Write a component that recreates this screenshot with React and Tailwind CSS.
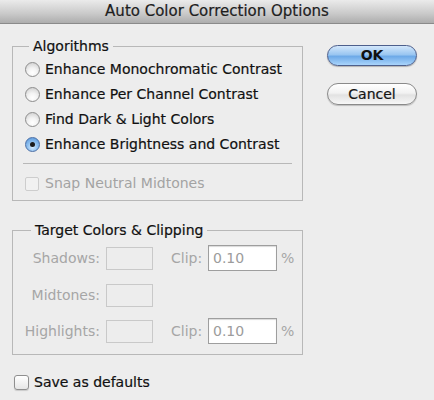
import React from "react";

const font = { fontFamily: '"DejaVu Sans", "Liberation Sans", sans-serif' };

function Radio({ checked, label }) {
  return (
    <div className="flex h-[25px] items-center pl-[12px]">
      <span
        className={
          "flex h-[15px] w-[15px] shrink-0 items-center justify-center rounded-full border " +
          (checked
            ? "border-[#4b6fa6] bg-[radial-gradient(circle_at_50%_70%,#d6ecff_0%,#8fc0ef_45%,#4e8fd6_100%)]"
            : "border-[#8d8d8d] bg-[radial-gradient(circle_at_50%_75%,#ffffff_0%,#f3f3f3_40%,#c9c9c9_100%)]")
        }
      >
        {checked && <span className="h-[5px] w-[5px] rounded-full bg-[#1b1b1b]" />}
      </span>
      <span className="ml-[5px] text-[14px] leading-[17px] text-[#111] [-webkit-text-stroke:0.2px_#111]">{label}</span>
    </div>
  );
}

function Field({ w, h, white, value }) {
  return (
    <div
      className={
        "flex items-center pl-[4px] text-[14px] " +
        (white
          ? "border border-[#9e9e9e] bg-white text-[#9c9c9c] shadow-[inset_0_1px_1px_rgba(0,0,0,0.15)]"
          : "border border-[#c9c9c9] bg-[#ededed]")
      }
      style={{ width: w, height: h }}
    >
      {value}
    </div>
  );
}

export default function App() {
  return (
    <div className="flex h-[400px] w-[434px] flex-col bg-[#ededed]" style={font}>
      <div className="flex h-[24px] shrink-0 items-center justify-center border-b border-[#8a8a8a] bg-[linear-gradient(#ebebeb,#c9c9c9_60%,#adadad)] text-[15px] text-[#1e1e1e] [-webkit-text-stroke:0.2px_#1e1e1e]">
        Auto Color Correction Options
      </div>
      <div className="flex pl-[12px] pt-[14px]">
        <div className="flex w-[291px] flex-col">
          <fieldset className="border border-[#b8b8b8] pb-[4px]">
            <legend className="ml-[16px] px-[4px] text-[14px] leading-[17px] text-[#111] [-webkit-text-stroke:0.2px_#111]">
              Algorithms
            </legend>
            <div className="pt-[2px]">
              <Radio label="Enhance Monochromatic Contrast" />
              <Radio label="Enhance Per Channel Contrast" />
              <Radio label="Find Dark & Light Colors" />
              <Radio checked label="Enhance Brightness and Contrast" />
            </div>
            <div className="mx-[10px] mt-[6px] h-px bg-[#b8b8b8]" />
            <div className="mt-[7px] flex h-[25px] items-center pl-[12px]">
              <span className="h-[14px] w-[14px] rounded-[2px] border border-[#cdcdcd] bg-[#f1f1f1]" />
              <span className="ml-[6px] text-[14px] leading-[17px] text-[#a3a3a3]">
                Snap Neutral Midtones
              </span>
            </div>
          </fieldset>

          <fieldset className="mt-[21px] border border-[#b8b8b8] pb-[10px] text-[14px] text-[#a6a6a6]">
            <legend className="ml-[18px] px-[4px] text-[14px] leading-[17px] text-[#111] [-webkit-text-stroke:0.2px_#111]">
              Target Colors &amp; Clipping
            </legend>
            <div className="mt-[6px] flex h-[26px] items-center">
              <span className="w-[87px] text-right">Shadows:</span>
              <div className="ml-[6px]">
                <Field w={47} h={23} />
              </div>
              <span className="ml-[18px] w-[32px]">Clip:</span>
              <div className="ml-[5px]">
                <Field w={69} h={26} white value="0.10" />
              </div>
              <span className="ml-[4px]">%</span>
            </div>
            <div className="mt-[11px] flex h-[26px] items-center">
              <span className="w-[87px] text-right">Midtones:</span>
              <div className="ml-[6px]">
                <Field w={47} h={23} />
              </div>
            </div>
            <div className="mt-[10px] flex h-[26px] items-center">
              <span className="w-[87px] text-right">Highlights:</span>
              <div className="ml-[6px]">
                <Field w={47} h={23} />
              </div>
              <span className="ml-[18px] w-[32px]">Clip:</span>
              <div className="ml-[5px]">
                <Field w={69} h={26} white value="0.10" />
              </div>
              <span className="ml-[4px]">%</span>
            </div>
          </fieldset>

          <div className="mt-[17px] flex h-[20px] items-center pl-[2px]">
            <span className="h-[15px] w-[15px] rounded-[3px] border border-[#8f8f8f] bg-[linear-gradient(#ffffff,#e6e6e6)] shadow-[0_1px_1px_rgba(0,0,0,0.15)]" />
            <span className="ml-[5px] text-[14px] leading-[17px] text-[#111] [-webkit-text-stroke:0.2px_#111]">Save as defaults</span>
          </div>
        </div>

        <div className="ml-[24px] flex flex-col pt-[7px]">
          <button className="flex h-[21px] w-[90px] items-center justify-center rounded-full border border-[#4d5f8c] bg-[linear-gradient(#d3e7fb,#9ac6f1_45%,#6eaae8_55%,#a9d4fb)] text-[14px] font-bold text-[#111] shadow-[0_1px_1px_rgba(0,0,0,0.25)]">
            OK
          </button>
          <button className="mt-[17px] flex h-[22px] w-[90px] items-center justify-center rounded-full border border-[#8a8a8a] bg-[linear-gradient(#ffffff,#f2f2f2_45%,#e2e2e2_55%,#f7f7f7)] text-[14px] text-[#151515] shadow-[0_1px_1px_rgba(0,0,0,0.2)] [-webkit-text-stroke:0.2px_#151515]">
            Cancel
          </button>
        </div>
      </div>
    </div>
  );
}
